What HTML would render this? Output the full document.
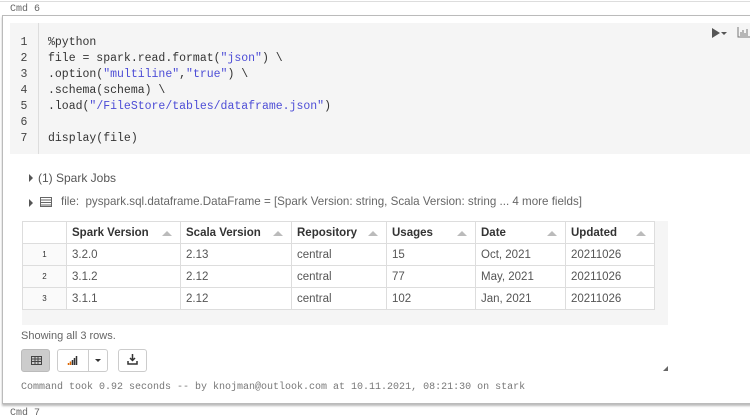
<!DOCTYPE html>
<html><head><style>
*{margin:0;padding:0;box-sizing:border-box}
body{width:750px;height:420px;background:#fff;position:relative;overflow:hidden;font-family:"Liberation Sans",sans-serif;color:#333}
.abs{position:absolute}
.mono{font-family:"Liberation Mono",monospace}
.code{font-size:11.5px;line-height:16px;color:#333}
.s{color:#4d4dd6}
table{border-collapse:collapse;font-size:11.5px}
td,th{border:1px solid #ddd;height:22px;padding:0 5px;text-align:left;white-space:nowrap}
th{font-weight:bold;color:#333;background:#fff;position:relative}
th .a{position:absolute;right:8px;top:9px;width:0;height:0;border-left:5px solid transparent;border-right:5px solid transparent;border-bottom:5px solid #bbb}
td.i{text-align:center;font-size:8px;background:#fafafa;color:#333}
td{background:#fff;color:#555}
.btn{position:absolute;border:1px solid #ccc;border-radius:3px;background:#fff;height:23px;top:349px}
</style></head><body>
<div class="abs" style="left:0;top:1px;width:750px;height:1px;background:#ddd"></div>
<div class="abs mono" style="left:10px;top:4px;font-size:10px;color:#666">Cmd 6</div>
<div class="abs" style="left:2px;top:15px;width:760px;height:389px;border:1px solid #bbb;box-shadow:0 2px 2px #bbb;background:#fff"></div>
<div class="abs" style="left:10px;top:23px;width:740px;height:131px;background:#f5f5f5"></div>
<div class="abs" style="left:38px;top:23px;width:1px;height:131px;background:#ddd"></div>
<div class="abs mono code" style="left:18px;top:35px;color:#444;text-align:center;width:12px">1<br>2<br>3<br>4<br>5<br>6<br>7</div>
<div class="abs mono code" style="left:48px;top:35px;white-space:pre">%python
file = spark.read.format(<span class="s">"json"</span>) \
.option(<span class="s">"multiline"</span>,<span class="s">"true"</span>) \
.schema(schema) \
.load(<span class="s">"/FileStore/tables/dataframe.json"</span>)

display(file)</div>
<div class="abs" style="left:712px;top:28px;width:0;height:0;border-top:5px solid transparent;border-bottom:5px solid transparent;border-left:8px solid #555"></div>
<div class="abs" style="left:721px;top:32px;width:0;height:0;border-left:3px solid transparent;border-right:3px solid transparent;border-top:3px solid #555"></div>
<svg class="abs" style="left:737px;top:27px" width="13" height="11"><path d="M1 0V10H13M4 9V5M6 9V3M8 9V6M10 9V2" stroke="#777" fill="none"/></svg>
<div class="abs" style="left:29px;top:174px;width:0;height:0;border-top:4px solid transparent;border-bottom:4px solid transparent;border-left:4px solid #555"></div>
<div class="abs" style="left:38px;top:171px;font-size:12px;color:#555">(1) Spark Jobs</div>
<div class="abs" style="left:29px;top:199px;width:0;height:0;border-top:4px solid transparent;border-bottom:4px solid transparent;border-left:4px solid #555"></div>
<svg class="abs" style="left:40px;top:197px" width="12" height="10"><rect x="0.5" y="0.5" width="11" height="9" fill="#fff" stroke="#666"/><path d="M1 3H11M1 5.5H11M1 8H11" stroke="#666"/></svg>
<div class="abs" style="left:61px;top:195px;font-size:11.6px;color:#666">file:&nbsp; pyspark.sql.dataframe.DataFrame = [Spark Version: string, Scala Version: string ... 4 more fields]</div>
<div class="abs" style="left:22px;top:221px;width:646px;height:104px;background:#f5f5f5"></div>
<table class="abs" style="left:22px;top:221px">
<tr><th style="width:44px"></th><th style="width:114px">Spark Version<span class="a"></span></th><th style="width:111px">Scala Version<span class="a"></span></th><th style="width:95px">Repository<span class="a"></span></th><th style="width:89px">Usages<span class="a"></span></th><th style="width:90px">Date<span class="a"></span></th><th style="width:89px">Updated<span class="a"></span></th></tr>
<tr><td class="i">1</td><td>3.2.0</td><td>2.13</td><td>central</td><td>15</td><td>Oct, 2021</td><td>20211026</td></tr>
<tr><td class="i">2</td><td>3.1.2</td><td>2.12</td><td>central</td><td>77</td><td>May, 2021</td><td>20211026</td></tr>
<tr><td class="i">3</td><td>3.1.1</td><td>2.12</td><td>central</td><td>102</td><td>Jan, 2021</td><td>20211026</td></tr>
</table>
<div class="abs" style="left:21px;top:330px;font-size:11px;color:#666">Showing all 3 rows.</div>
<div class="btn" style="left:21px;width:29px;background:#ccc;border-color:#bbb"></div>
<svg class="abs" style="left:31px;top:356px" width="11" height="9"><rect x="0.5" y="0.5" width="10" height="8" fill="none" stroke="#444"/><path d="M1 3H10M1 5.5H10M4 1V8M7 1V8" stroke="#444"/></svg>
<div class="btn" style="left:57px;width:51px"></div>
<div class="abs" style="left:88px;top:350px;width:1px;height:21px;background:#ccc"></div>
<svg class="abs" style="left:67px;top:355px" width="12" height="10"><path d="M1.5 10V8M3.5 10V6.5" stroke="#d60" stroke-width="1.5"/><path d="M5.5 10V5M7.5 10V3M9.5 10V1" stroke="#333" stroke-width="1.5"/></svg>
<div class="abs" style="left:95px;top:359px;width:0;height:0;border-left:3px solid transparent;border-right:3px solid transparent;border-top:3px solid #333"></div>
<div class="btn" style="left:118px;width:29px"></div>
<svg class="abs" style="left:127px;top:354px" width="11" height="11"><path d="M5.5 0V6M3 4L5.5 6.5L8 4" stroke="#333" fill="none" stroke-width="1.5"/><path d="M1 7V10H10V7" stroke="#333" fill="none" stroke-width="1.5"/></svg>
<div class="abs" style="left:663px;top:366px;width:0;height:0;border-left:5px solid transparent;border-bottom:5px solid #666"></div>
<div class="abs mono" style="left:21px;top:382px;font-size:10px;color:#777">Command took 0.92 seconds -- by knojman@outlook.com at 10.11.2021, 08:21:30 on stark</div>
<div class="abs mono" style="left:10px;top:408px;font-size:10px;color:#666">Cmd 7</div>
</body></html>
